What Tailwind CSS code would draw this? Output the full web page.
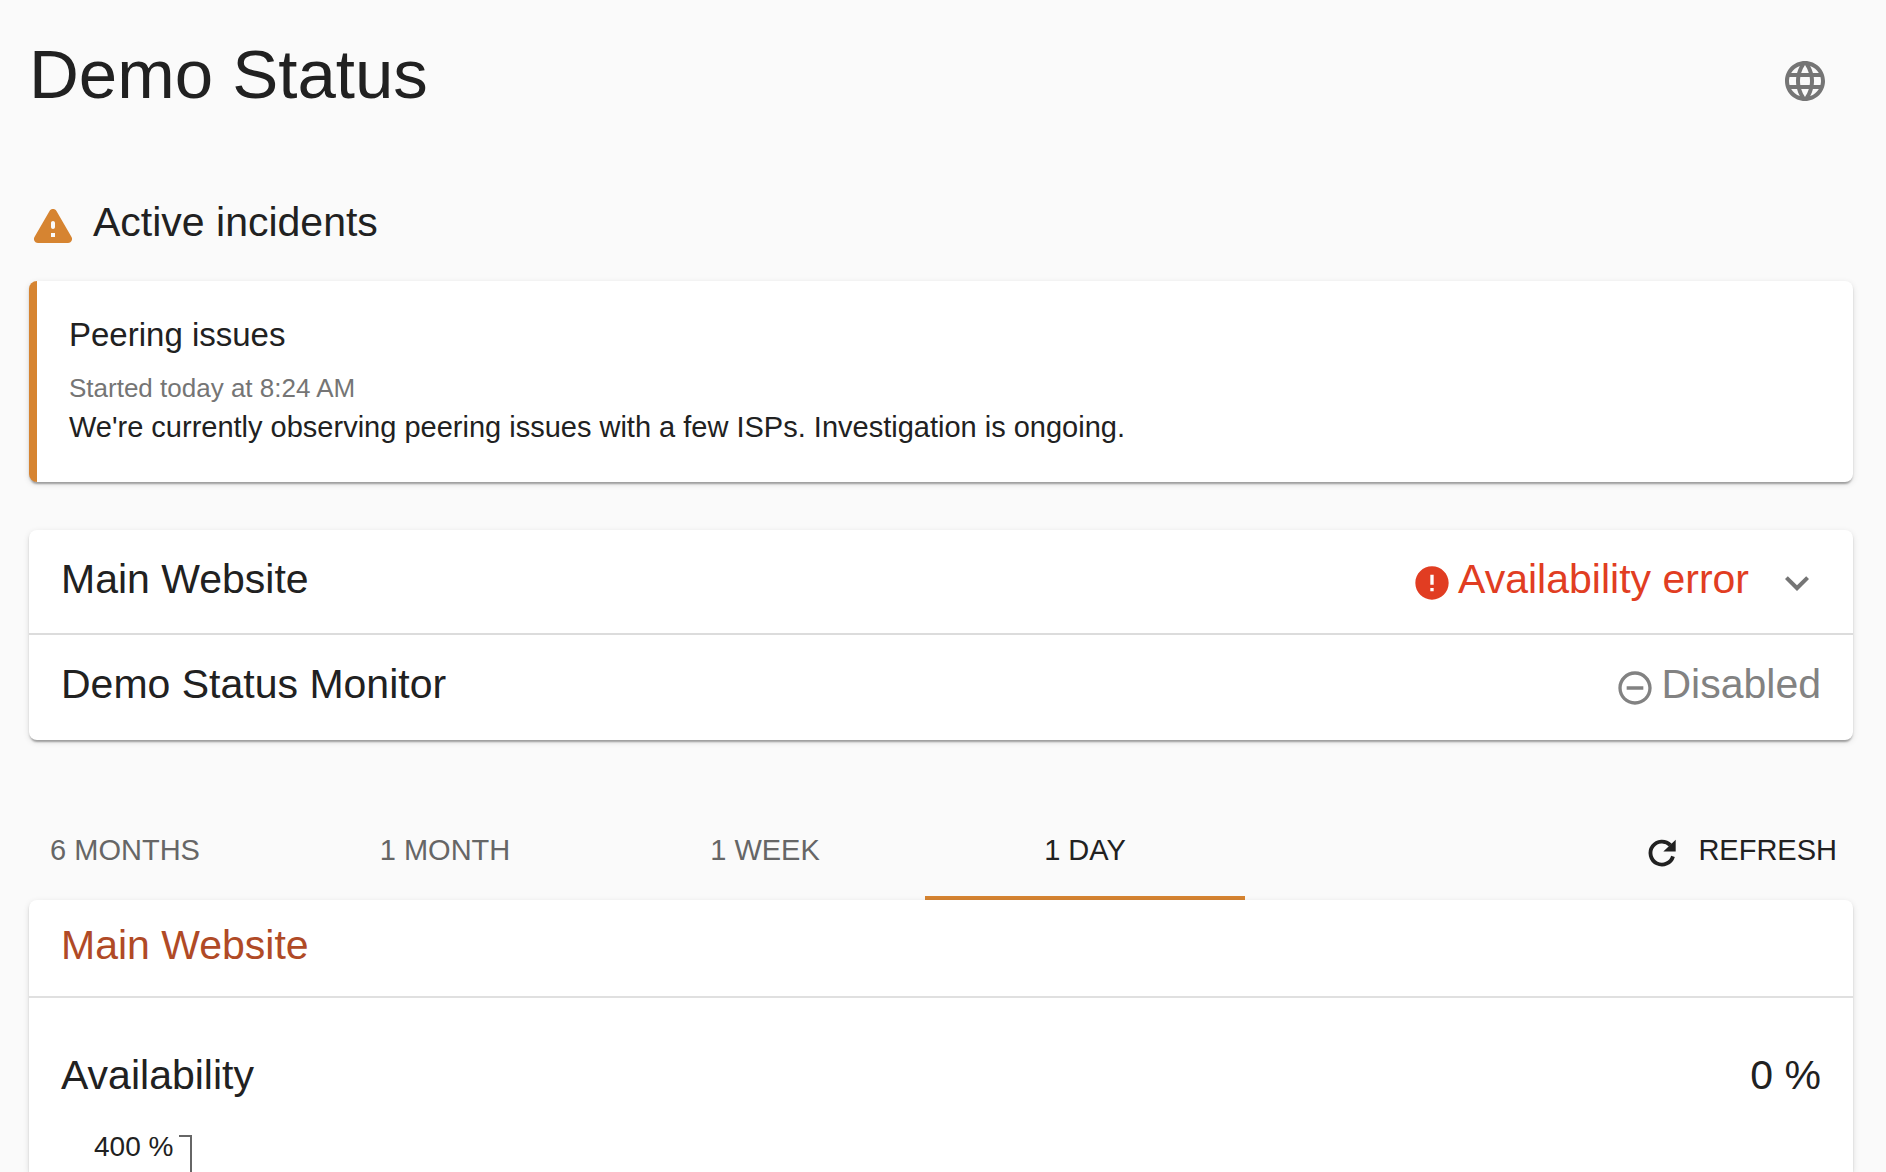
<!DOCTYPE html>
<html lang="en">
  <head>
    <meta charset="UTF-8" />
    <meta name="viewport" content="width=device-width, initial-scale=1.0" />
    <title>Demo Status</title>
    <script src="https://cdn.jsdelivr.net/npm/@tailwindcss/browser@4"></script>
  </head>
  <body class="flex min-h-screen flex-col bg-[#fafafa] pl-[29px] pr-[33px] pt-[33px] font-['Liberation_Sans',Arial,sans-serif] text-[#212121]">
    <header class="flex items-end justify-between">
      <h1 class="text-[69px] leading-[84px]">Demo Status</h1>
      <button type="button" aria-label="Language" class="mr-3 rounded-full p-3 text-[#757575]">
        <svg class="size-12" viewBox="0 0 24 24" fill="currentColor"><path d="M11.99 2C6.47 2 2 6.48 2 12s4.47 10 9.99 10C17.52 22 22 17.52 22 12S17.52 2 11.99 2zm6.93 6h-2.95c-.32-1.25-.78-2.45-1.38-3.56 1.84.63 3.37 1.91 4.33 3.56zM12 4.04c.83 1.2 1.48 2.53 1.91 3.96h-3.82c.43-1.43 1.08-2.76 1.91-3.96zM4.26 14C4.1 13.36 4 12.69 4 12s.1-1.36.26-2h3.38c-.08.66-.14 1.32-.14 2 0 .68.06 1.34.14 2H4.26zm.82 2h2.95c.32 1.25.78 2.45 1.38 3.56-1.84-.63-3.37-1.9-4.33-3.56zm2.95-8H5.08c.96-1.66 2.49-2.93 4.33-3.56C8.81 5.55 8.35 6.75 8.03 8zM12 19.96c-.83-1.2-1.48-2.53-1.91-3.96h3.82c-.43 1.43-1.08 2.76-1.91 3.96zM14.34 14H9.66c-.09-.66-.16-1.32-.16-2 0-.68.07-1.35.16-2h4.68c.09.65.16 1.32.16 2 0 .68-.07 1.34-.16 2zm.25 5.56c.6-1.11 1.06-2.31 1.38-3.56h2.95c-.96 1.65-2.49 2.93-4.33 3.56zM16.36 14c.08-.66.14-1.32.14-2 0-.68-.06-1.34-.14-2h3.38c.16.64.26 1.31.26 2s-.1 1.36-.26 2h-3.38z" /></svg>
      </button>
    </header>

    <!-- Incidents -->
    <section class="mt-[84px]">
      <div class="flex items-start gap-4">
        <svg class="size-12 text-[#d68431]" viewBox="0 0 24 24" fill="currentColor"><path d="M4.47 21h15.06c1.54 0 2.5-1.67 1.73-3L13.73 4.99c-.77-1.33-2.69-1.33-3.46 0L2.74 18c-.77 1.33.19 3 1.73 3zM12 14c-.55 0-1-.45-1-1v-2c0-.55.45-1 1-1s1 .45 1 1v2c0 .55-.45 1-1 1zm1 4h-2v-2h2v2z" /></svg>
        <h2 class="text-[41px] leading-[42px]">Active incidents</h2>
      </div>
      <article class="mt-8 rounded-lg border-l-8 border-[#d68431] bg-white px-8 pt-8 pb-[35px] shadow-[0_4px_2px_-2px_rgba(0,0,0,0.2),0_2px_2px_0_rgba(0,0,0,0.14),0_2px_6px_0_rgba(0,0,0,0.12)]">
        <h3 class="mb-3 text-[33px] leading-[44px]">Peering issues</h3>
        <p class="text-[26px] leading-[38px] text-[#757575]">Started today at 8:24 AM</p>
        <p class="text-[29px] leading-10">We're currently observing peering issues with a few ISPs. Investigation is ongoing.</p>
      </article>
    </section>

    <!-- Monitors -->
    <section class="mt-12 rounded-lg bg-white text-[41px] leading-[42px] shadow-[0_4px_2px_-2px_rgba(0,0,0,0.2),0_2px_2px_0_rgba(0,0,0,0.14),0_2px_6px_0_rgba(0,0,0,0.12)]">
      <button type="button" aria-expanded="false" class="flex h-[105px] w-full items-start border-b-2 border-[#dcdcdc] px-8 pt-7">
        <span>Main Website</span>
        <span class="ml-auto flex items-start gap-1.5 text-[#e13d22]">
          <svg class="mt-[5px] size-10" viewBox="0 0 24 24" fill="currentColor"><path d="M12 2C6.48 2 2 6.48 2 12s4.48 10 10 10 10-4.48 10-10S17.52 2 12 2zm1 15h-2v-2h2v2zm0-4h-2V7h2v6z" /></svg>
          Availability error
        </span>
        <svg class="mt-px ml-6 size-12 text-[#757575]" viewBox="0 0 24 24" fill="currentColor"><path d="M16.59 8.59L12 13.17 7.41 8.59 6 10l6 6 6-6z" /></svg>
      </button>
      <div class="flex h-[105px] items-start justify-between px-8 pt-7">
        <span>Demo Status Monitor</span>
        <span class="flex items-start gap-1.5 text-[#828282]">
          <svg class="mt-[5px] size-10" viewBox="0 0 24 24" fill="currentColor"><path d="M7 11v2h10v-2H7zm5-9C6.48 2 2 6.48 2 12s4.48 10 10 10 10-4.48 10-10S17.52 2 12 2zm0 18c-4.41 0-8-3.59-8-8s3.59-8 8-8 8 3.59 8 8-3.59 8-8 8z" /></svg>
          Disabled
        </span>
      </div>
    </section>

    <!-- Time range -->
    <div class="mt-16 flex h-24 text-[29px] leading-10">
      <div role="tablist" class="flex text-[#666666]">
        <button type="button" role="tab" class="w-64 pr-16 pb-1 uppercase">6 months</button>
        <button type="button" role="tab" class="w-80 pb-1 uppercase">1 month</button>
        <button type="button" role="tab" class="w-80 pb-1 uppercase">1 week</button>
        <button type="button" role="tab" aria-selected="true" class="w-80 border-b-4 border-[#d68431] uppercase text-[#212121]">1 day</button>
      </div>
      <button type="button" class="ml-auto flex items-center gap-4 px-4 pt-0.5 uppercase">
        <svg class="size-10" viewBox="0 0 24 24" fill="currentColor">
          <path d="M17 7.3A6.9 6.9 0 1 0 18.6 14" fill="none" stroke="currentColor" stroke-width="2.3" />
          <path d="M20.2 4v7.1h-7.4z" />
        </svg>
        <span class="pb-1.5">Refresh</span>
      </button>
    </div>

    <section class="flex grow flex-col rounded-t-lg bg-white shadow-[0_4px_2px_-2px_rgba(0,0,0,0.2),0_2px_2px_0_rgba(0,0,0,0.14),0_2px_6px_0_rgba(0,0,0,0.12)]">
      <div class="h-[98px] border-b-2 border-[#e0e0e0] px-8 pt-6 text-[41px] leading-[42px]">
        <a href="#" class="text-[#b04a26]">Main Website</a>
      </div>
      <div class="flex justify-between px-8 pt-14 text-[41px] leading-[42px]">
        <h3>Availability</h3>
        <span>0 %</span>
      </div>
      <!-- y axis -->
      <div class="mt-[39px] flex grow gap-1.5 pl-[65px]">
        <span class="text-[28px] leading-6">400 %</span>
        <div class="w-[13px] border-t-2 border-r-2 border-[#666666]"></div>
      </div>
    </section>
  </body>
</html>
